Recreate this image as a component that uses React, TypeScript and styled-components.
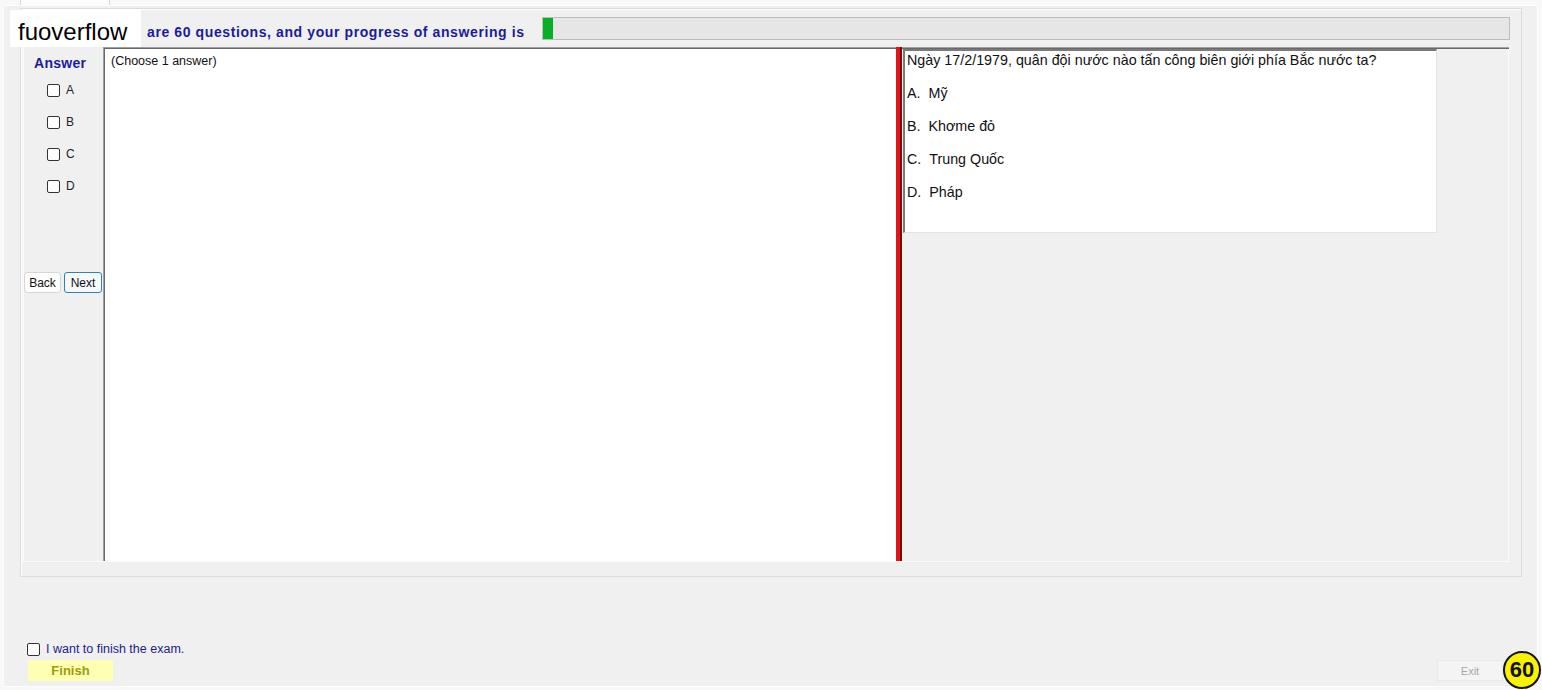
import styled, { createGlobalStyle } from "styled-components";

const GlobalStyle = createGlobalStyle`
	* {
		box-sizing: border-box;
	}
	body {
		margin: 0;
		background: #f8f8f8;
		font-family: "Liberation Sans", Arial, sans-serif;
	}
`;

const options = [
	{ key: "A", text: "Mỹ" },
	{ key: "B", text: "Khơme đỏ" },
	{ key: "C", text: "Trung Quốc" },
	{ key: "D", text: "Pháp" },
];

export default function App() {
	return (
		<Screen>
			<GlobalStyle />
			<TabStrip>
				<Tab />
			</TabStrip>
			<Page>
				<GroupBox>
					<HeaderRow>
						<HeaderText>are 60 questions, and your progress of answering is</HeaderText>
						<Progress>
							<ProgressFill style={{ width: "10px" }} />
						</Progress>
					</HeaderRow>
					<MainPanel>
						<LeftColumn>
							<AnswerTitle>Answer</AnswerTitle>
							<ChoiceList>
								{options.map((o) => (
									<ChoiceRow key={o.key}>
										<Check type="checkbox" />
										<span>{o.key}</span>
									</ChoiceRow>
								))}
							</ChoiceList>
							<NavRow>
								<NavButton type="button">Back</NavButton>
								<NavButton type="button" focused>
									Next
								</NavButton>
							</NavRow>
						</LeftColumn>
						<SplitOuter>
							<SplitInner>
								<AnswerArea>(Choose 1 answer)</AnswerArea>
								<Splitter />
								<RightPane>
									<QuestionBox>
										<QuestionLine>Ngày 17/2/1979, quân đội nước nào tấn công biên giới phía Bắc nước ta?</QuestionLine>
										{options.map((o) => (
											<OptionLine key={o.key}>
												{o.key}.&nbsp;&nbsp;{o.text}
											</OptionLine>
										))}
									</QuestionBox>
								</RightPane>
							</SplitInner>
						</SplitOuter>
					</MainPanel>
				</GroupBox>
				<FinishCheckRow>
					<Check type="checkbox" />
					<FinishLabel>I want to finish the exam.</FinishLabel>
				</FinishCheckRow>
				<ButtonRow>
					<FinishButton type="button">Finish</FinishButton>
					<ExitButton type="button">Exit</ExitButton>
				</ButtonRow>
			</Page>
			<Logo>fuoverflow</Logo>
			<CountBadge>60</CountBadge>
		</Screen>
	);
}

const Screen = styled.div`
	position: relative;
	width: 1542px;
	height: 690px;
	overflow: hidden;
`;

const TabStrip = styled.div`
	height: 5px;
	padding-left: 20px;
`;

const Tab = styled.div`
	width: 90px;
	height: 5px;
	background: #fcfcfc;
	border-left: 1px solid #dadada;
	border-right: 1px solid #dadada;
`;

const Page = styled.div`
	margin: 0 4px 0 3px;
	height: 682px;
	background: #f0f0f0;
	border: 1px solid #fdfdfd;
	display: flex;
	flex-direction: column;
`;

const GroupBox = styled.div`
	margin: 2px 15px 0 16px;
	height: 569px;
	border: 1px solid #dcdcdc;
	box-shadow: inset 1px 1px 0 #fff;
	display: flex;
	flex-direction: column;
`;

const HeaderRow = styled.div`
	display: flex;
	align-items: center;
	gap: 17px;
	height: 23px;
	margin: 8px 11px 0 0;
	padding-left: 126px;
`;

const HeaderText = styled.div`
	margin-top: 7px;
	font-size: 14px;
	letter-spacing: 0.6px;
	font-weight: 700;
	color: #1b1b9c;
	white-space: nowrap;
`;

const Progress = styled.div`
	flex: 1;
	height: 23px;
	background: #e6e6e6;
	border: 1px solid #bcbcbc;
`;

const ProgressFill = styled.div`
	height: 100%;
	background: #06b025;
`;

const MainPanel = styled.div`
	display: flex;
	height: 515px;
	margin: 7px 12px 0 2px;
	border-left: 1px solid #fbfbfb;
	border-bottom: 1px solid #fbfbfb;
`;

const LeftColumn = styled.div`
	width: 79px;
	display: flex;
	flex-direction: column;
`;

const AnswerTitle = styled.div`
	padding: 8px 0 0 10px;
	font-size: 14px;
	letter-spacing: 0.3px;
	line-height: 17px;
	font-weight: 700;
	color: #1b1b9c;
`;

const ChoiceList = styled.div`
	display: flex;
	flex-direction: column;
	gap: 16px;
	margin-top: 10px;
	padding-left: 23px;
`;

const ChoiceRow = styled.label`
	display: flex;
	align-items: center;
	gap: 6px;
	height: 16px;
	font-size: 12px;
	color: #222;
`;

const Check = styled.input`
	appearance: none;
	margin: 0;
	width: 13px;
	height: 13px;
	border: 1px solid #333;
	border-radius: 2px;
	background: #fff;
`;

const NavRow = styled.div`
	display: flex;
	gap: 3px;
	margin-top: 78px;
`;

const NavButton = styled.button<{ focused?: boolean }>`
	height: 21px;
	width: ${({ focused }) => (focused ? "38px" : "37px")};
	padding: 0;
	font-family: "Liberation Sans", Arial, sans-serif;
	font-size: 12px;
	color: #111;
	background: ${({ focused }) => (focused ? "#f5faff" : "#fdfdfd")};
	border: 1px solid ${({ focused }) => (focused ? "#2f7fc1" : "#d6d6d6")};
	border-radius: 3px;
`;

const SplitOuter = styled.div`
	flex: 1;
	display: flex;
	border-top: 1px solid #a0a0a0;
	border-left: 1px solid #a0a0a0;
`;

const SplitInner = styled.div`
	flex: 1;
	display: flex;
	border-top: 1px solid #696969;
	border-left: 1px solid #696969;
`;

const AnswerArea = styled.div`
	width: 791px;
	background: #fff;
	padding: 5px 0 0 6px;
	font-size: 12.5px;
	color: #111;
`;

const Splitter = styled.div`
	width: 6px;
	margin-top: -2px;
	background: #e31519;
	border-right: 2px solid #6a1010;
`;

const RightPane = styled.div`
	flex: 1;
	background: #f0f0f0;
	padding: 0 0 0 1px;
	border-right: 1px solid #fbfbfb;
`;

const QuestionBox = styled.div`
	width: 534px;
	height: 184px;
	background: #fff;
	border-top: 2px solid #7a7a7a;
	border-left: 2px solid #7a7a7a;
	border-right: 1px solid #e3e3e3;
	border-bottom: 1px solid #e3e3e3;
	padding: 0 0 0 2px;
`;

const QuestionLine = styled.div`
	font-size: 14.3px;
	line-height: 18px;
	color: #111;
`;

const OptionLine = styled(QuestionLine)`
	margin-top: 15px;
`;

const FinishCheckRow = styled.label`
	display: flex;
	align-items: center;
	gap: 6px;
	height: 16px;
	margin: 64px 0 0 23px;
`;

const FinishLabel = styled.span`
	font-size: 12.5px;
	color: #1c1c8c;
`;

const ButtonRow = styled.div`
	display: flex;
	justify-content: space-between;
	align-items: center;
	margin-top: 3px;
	padding: 0 34px 0 24px;
`;

const FinishButton = styled.button`
	width: 85px;
	height: 21px;
	padding: 0;
	background: #ffffb4;
	border: none;
	font-family: "Liberation Sans", Arial, sans-serif;
	font-size: 13px;
	font-weight: 700;
	color: #9c9c08;
`;

const ExitButton = styled.button`
	width: 66px;
	height: 21px;
	padding: 0;
	background: #f4f4f4;
	border: 1px solid #e9e9e9;
	font-family: "Liberation Sans", Arial, sans-serif;
	font-size: 11px;
	color: #a8a8a8;
`;

const Logo = styled.div`
	position: absolute;
	left: 10px;
	top: 10px;
	width: 131px;
	height: 37px;
	background: #fff;
	padding-left: 8px;
	font-size: 24px;
	line-height: 43px;
	color: #000;
`;

const CountBadge = styled.div`
	position: absolute;
	right: 1px;
	bottom: 1px;
	width: 38px;
	height: 38px;
	border-radius: 50%;
	background: #f8f200;
	border: 2px solid #111;
	display: flex;
	align-items: center;
	justify-content: center;
	font-size: 22px;
	font-weight: 700;
	color: #111;
`;
